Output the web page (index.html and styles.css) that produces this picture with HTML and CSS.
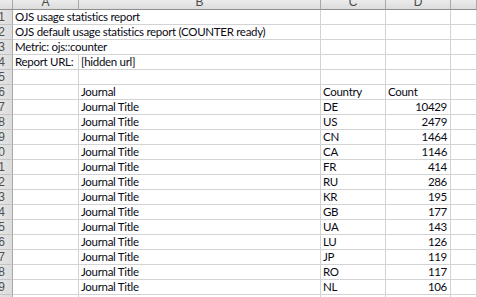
FILE: index.html
```html
<!DOCTYPE html>
<html>
<head>
<meta charset="utf-8">
<link rel="stylesheet" href="styles.css">
</head>
<body>
<div class="sheet">
  <div class="hd corner"></div>
  <div class="hd col"><span>A</span></div>
  <div class="hd col"><span>B</span></div>
  <div class="hd col"><span>C</span></div>
  <div class="hd col"><span>D</span></div>
  <div class="hd col"><span></span></div>

  <div class="rh"><span>1</span></div>
  <div class="c wide">OJS usage statistics report</div><div class="c"></div><div class="c"></div><div class="c"></div>
  <div class="rh"><span>2</span></div>
  <div class="c wide">OJS default usage statistics report (COUNTER ready)</div><div class="c"></div><div class="c"></div><div class="c"></div>
  <div class="rh"><span>3</span></div>
  <div class="c wide">Metric: ojs::counter</div><div class="c"></div><div class="c"></div><div class="c"></div>
  <div class="rh"><span>4</span></div>
  <div class="c">Report URL:</div><div class="c">[hidden url]</div><div class="c"></div><div class="c"></div><div class="c"></div>
  <div class="rh"><span>5</span></div>
  <div class="c"></div><div class="c"></div><div class="c"></div><div class="c"></div><div class="c"></div>
  <div class="rh"><span>6</span></div>
  <div class="c"></div><div class="c">Journal</div><div class="c">Country</div><div class="c">Count</div><div class="c"></div>
  <div class="rh"><span>7</span></div>
  <div class="c"></div><div class="c">Journal Title</div><div class="c">DE</div><div class="c num">10429</div><div class="c"></div>
  <div class="rh"><span>8</span></div>
  <div class="c"></div><div class="c">Journal Title</div><div class="c">US</div><div class="c num">2479</div><div class="c"></div>
  <div class="rh"><span>9</span></div>
  <div class="c"></div><div class="c">Journal Title</div><div class="c">CN</div><div class="c num">1464</div><div class="c"></div>
  <div class="rh"><span>10</span></div>
  <div class="c"></div><div class="c">Journal Title</div><div class="c">CA</div><div class="c num">1146</div><div class="c"></div>
  <div class="rh"><span>11</span></div>
  <div class="c"></div><div class="c">Journal Title</div><div class="c">FR</div><div class="c num">414</div><div class="c"></div>
  <div class="rh"><span>12</span></div>
  <div class="c"></div><div class="c">Journal Title</div><div class="c">RU</div><div class="c num">286</div><div class="c"></div>
  <div class="rh"><span>13</span></div>
  <div class="c"></div><div class="c">Journal Title</div><div class="c">KR</div><div class="c num">195</div><div class="c"></div>
  <div class="rh"><span>14</span></div>
  <div class="c"></div><div class="c">Journal Title</div><div class="c">GB</div><div class="c num">177</div><div class="c"></div>
  <div class="rh"><span>15</span></div>
  <div class="c"></div><div class="c">Journal Title</div><div class="c">UA</div><div class="c num">143</div><div class="c"></div>
  <div class="rh"><span>16</span></div>
  <div class="c"></div><div class="c">Journal Title</div><div class="c">LU</div><div class="c num">126</div><div class="c"></div>
  <div class="rh"><span>17</span></div>
  <div class="c"></div><div class="c">Journal Title</div><div class="c">JP</div><div class="c num">119</div><div class="c"></div>
  <div class="rh"><span>18</span></div>
  <div class="c"></div><div class="c">Journal Title</div><div class="c">RO</div><div class="c num">117</div><div class="c"></div>
  <div class="rh"><span>19</span></div>
  <div class="c"></div><div class="c">Journal Title</div><div class="c">NL</div><div class="c num">106</div><div class="c"></div>
  <div class="rh"><span>20</span></div>
  <div class="c"></div><div class="c"></div><div class="c"></div><div class="c"></div><div class="c"></div>
</div>
</body>
</html>
```
FILE: styles.css
```css
html, body {
  margin: 0;
  padding: 0;
  background: #fff;
  overflow: hidden;
}
.sheet {
  display: grid;
  grid-template-columns: 13px 66px 242px 65px 65px 1fr;
  grid-template-rows: 10px;
  grid-auto-rows: 15px;
  width: 477px;
  font-family: Lato, "Open Sans", sans-serif;
  font-size: 11.5px;
  letter-spacing: -0.3px;
  color: #0a0a14;
}
.hd {
  box-sizing: border-box;
  background: linear-gradient(#ececec, #dcdcdc);
  border-right: 1px solid #a9a9a9;
  border-bottom: 1px solid #8e8e8e;
  overflow: hidden;
  display: flex;
  align-items: flex-end;
  justify-content: center;
  color: #4a4a4a;
  font-family: "Liberation Sans", sans-serif;
  font-size: 12px;
  line-height: 12px;
  letter-spacing: 0;
}
.hd span {
  margin-bottom: 1px;
}
.rh {
  box-sizing: border-box;
  background: linear-gradient(90deg, #e4e4e4, #dcdcdc);
  border-right: 1px solid #a9a9a9;
  border-bottom: 1px solid #c4c4c4;
  overflow: hidden;
  display: flex;
  align-items: center;
  justify-content: flex-end;
  color: #505050;
  font-family: "Liberation Sans", sans-serif;
  font-size: 12px;
  letter-spacing: 0;
}
.rh span {
  margin-right: 7px;
  flex: none;
}
.c {
  box-sizing: border-box;
  border-right: 1px solid #d3d3d3;
  border-bottom: 1px solid #d3d3d3;
  padding-left: 2px;
  padding-right: 3px;
  line-height: 14px;
  white-space: nowrap;
  overflow: hidden;
}
.wide {
  grid-column: span 2;
}
.num {
  text-align: right;
}
```
